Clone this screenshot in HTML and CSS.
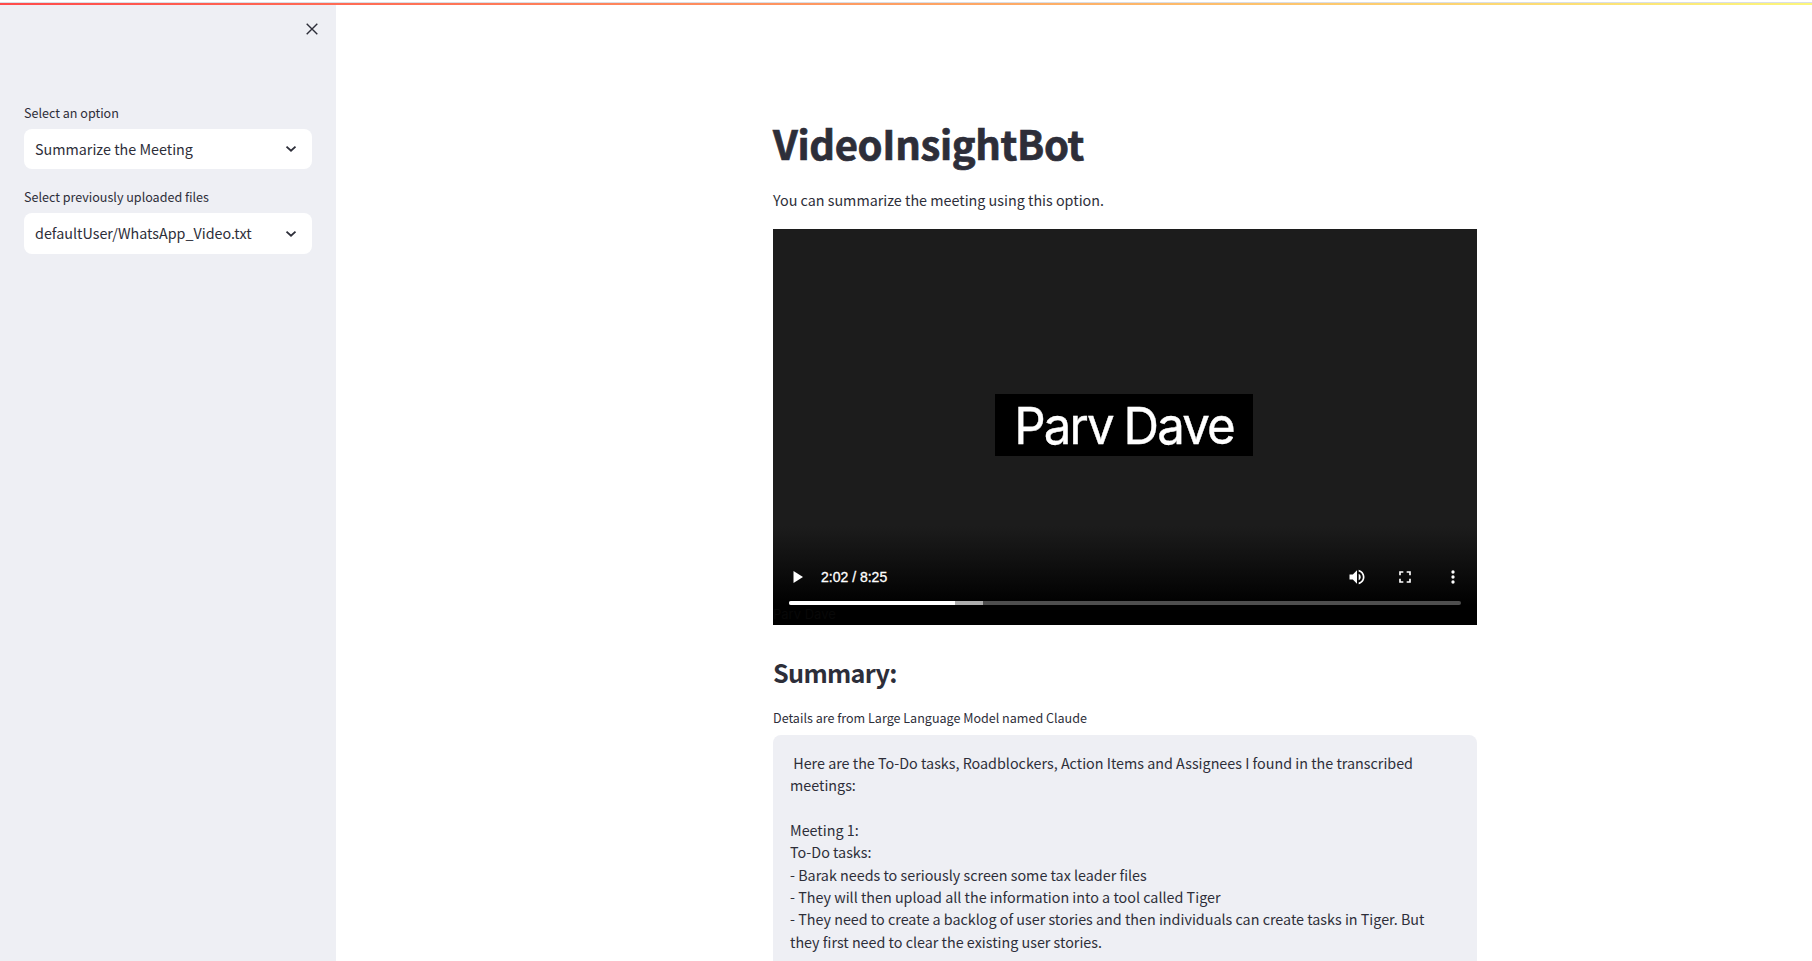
FILE: index.html
```html
<!DOCTYPE html>
<html lang="en">
<head>
<meta charset="utf-8">
<title>VideoInsightBot</title>
<link rel="stylesheet" href="styles.css">
</head>
<body>
<div class="decoration"></div>
<div class="app">
  <aside class="sidebar">
    <button class="close" aria-label="Close sidebar"><svg width="12" height="12" viewBox="0 0 12 12"><path d="M.7.700l10.600 10.600M11.300.700.700 11.300"/></svg></button>
    <div class="field">
      <label class="label">Select an option</label>
      <div class="select"><span>Summarize the Meeting</span><svg width="12" height="8" viewBox="0 0 12 8"><path d="M1.500 1.600 6 5.700l4.500-4.100"/></svg></div>
    </div>
    <div class="field">
      <label class="label">Select previously uploaded files</label>
      <div class="select tall"><span>defaultUser/WhatsApp_Video.txt</span><svg width="12" height="8" viewBox="0 0 12 8"><path d="M1.500 1.600 6 5.700l4.500-4.100"/></svg></div>
    </div>
  </aside>
  <main class="main">
    <div class="content">
      <h1 class="title">VideoInsightBot</h1>
      <p class="intro">You can summarize the meeting using this option.</p>
      <div class="video">
        <div class="stage"><div class="speaker"><div class="name">Parv Dave</div></div></div>
        <div class="controls">
          <svg class="play" width="11" height="12" viewBox="0 0 11 12"><path d="M.5 0v12L10 6z"/></svg>
          <span class="time">2:02 / 8:25</span>
          <svg class="icon" width="20" height="20" viewBox="0 0 24 24"><path d="M3 9v6h4l5 5V4L7 9H3zm13.5 3A4.5 4.500 0 0 0 14 7.970v8.050c1.480-.730 2.500-2.250 2.500-4.020zM14 3.230v2.060c2.890.860 5 3.540 5 6.710s-2.110 5.850-5 6.710v2.060c4.010-.910 7-4.490 7-8.770s-2.990-7.860-7-8.770z"/></svg>
          <svg class="icon" width="20" height="20" viewBox="0 0 24 24"><path d="M7 14H5v5h5v-2H7v-3zm-2-4h2V7h3V5H5v5zm12 7h-3v2h5v-5h-2v3zM14 5v2h3v3h2V5h-5z"/></svg>
          <svg class="icon" width="20" height="20" viewBox="0 0 24 24"><path d="M12 8a2 2 0 1 0 0-4 2 2 0 0 0 0 4zm0 2a2 2 0 1 0 0 4 2 2 0 0 0 0-4zm0 6a2 2 0 1 0 0 4 2 2 0 0 0 0-4z"/></svg>
        </div>
        <div class="track"><div class="played"></div></div>
        <div class="caption">Parv Dave</div>
      </div>
      <h2 class="heading">Summary:</h2>
      <label class="label details">Details are from Large Language Model named Claude</label>
      <div class="textarea"> Here are the To-Do tasks, Roadblockers, Action Items and Assignees I found in the transcribed
meetings:

Meeting 1:
To-Do tasks:
- Barak needs to seriously screen some tax leader files
- They will then upload all the information into a tool called Tiger
- They need to create a backlog of user stories and then individuals can create tasks in Tiger. But
they first need to clear the existing user stories.</div>
    </div>
  </main>
</div>
</body>
</html>
```
FILE: styles.css
```css
* { box-sizing: border-box; }
body {
  margin: 0;
  height: 961px;
  overflow: hidden;
  display: flex;
  flex-direction: column;
  background: #fff;
  color: #2d2e39;
  font-family: "Noto Sans CJK SC", "Noto Sans", sans-serif;
  font-size: 14.33px;
}
.decoration {
  flex: none;
  height: 5px;
  border-top: 2px solid #fff;
  background: linear-gradient(#d9dee6, #d9dee6) 0 0 / 100% 1px no-repeat, linear-gradient(90deg, #ff4b4b, #fcf67c);
}
.app { flex: 1; display: flex; min-height: 0; }
.sidebar { flex: none; width: 336px; padding: 18px 18px 0 24px; background: #eeeff4; }
.close { display: block; margin: 0 0 68px auto; padding: 0; border: 0; background: none; width: 12px; height: 12px; }
.close svg { display: block; fill: none; stroke: #2d2e39; stroke-width: 1.4; }
.field { margin: 0 6px 18px 0; }
.label { display: block; height: 20px; line-height: 20px; font-size: 12.55px; white-space: nowrap; }
.select {
  display: flex; align-items: center; justify-content: space-between;
  height: 40px; margin-top: 6px; padding: 0 15px 0 11px; border-radius: 8px; background: #fff; white-space: nowrap;
}
.tall { height: 41px; }
.select span { line-height: 24px; }
.tall span { padding-bottom: 1px; }
.select svg { fill: none; stroke: #2d2e39; stroke-width: 1.8; }
.main { flex: 1; min-width: 0; display: flex; justify-content: center; overflow: hidden; }
.content { width: 704px; flex: none; margin-left: 102px; }
.title { margin: 112px 0 0; height: 53px; line-height: 53px; font-size: 40px; font-weight: 700; letter-spacing: -.33px; -webkit-text-stroke: .7px #2d2e39; }
.intro { margin: 18px 0 0; height: 41px; line-height: 24px; }
.video { height: 396px; display: flex; flex-direction: column; background: linear-gradient(#1c1c1c 0 297px, #111 330px, #000 376px); }
.stage { flex: none; height: 336px; display: flex; align-items: flex-start; justify-content: center; padding: 165px 2px 0 0; }
.speaker { flex: none; width: 258px; height: 62px; background: #000; color: #fff; overflow: hidden; }
.name { font: 400 51px/64px Inter, sans-serif; letter-spacing: -2px; word-spacing: -1px; text-align: center; white-space: nowrap; transform: scaleX(.965); -webkit-text-stroke: .4px #fff; }
.controls { display: flex; align-items: center; height: 24px; padding: 0 14px 0 20px; color: #fff; }
.controls svg { fill: #fff; flex: none; }
.time { margin-left: 17px; margin-right: auto; font: 14px/20px "Liberation Sans", Arial, sans-serif; -webkit-text-stroke: .3px #fff; }
.icon + .icon { margin-left: 28px; }
.track { height: 4px; flex: none; margin: 12px 16px 0; border-radius: 2px; overflow: hidden; background: linear-gradient(90deg, #adadad 194px, #4e4e4e 194px); }
.played { width: 166px; height: 4px; background: #fff; }
.caption { font: 13px/18px Inter, sans-serif; color: #080808; }
.heading { margin: 30px 0 0; height: 34px; line-height: 34px; font-size: 25.2px; font-weight: 700; letter-spacing: -.68px; }
.details { margin-top: 19px; margin-bottom: 7px; }
.textarea { height: 226px; padding: 16.6px 17px 0; border-radius: 8px 8px 0 0; background: #eeeff4; line-height: 22.4px; white-space: pre; overflow: hidden; }
```
